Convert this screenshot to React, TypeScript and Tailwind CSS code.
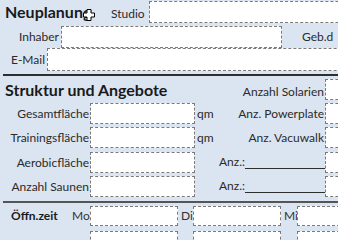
import React from 'react';

const Field: React.FC<{ className?: string }> = ({ className = '' }) => (
  <div className={`bg-white border border-dashed border-[#7a7a7a] shrink-0 ${className}`} />
);

const Label: React.FC<{ className?: string; children: React.ReactNode }> = ({ className = '', children }) => (
  <span className={`shrink-0 whitespace-nowrap text-[12px] text-[#2a2a2a] ${className}`}>{children}</span>
);

const rows = [
  { left: 'Gesamtfläche', unit: 'qm', right: 'Anz. Powerplate', mt: 'mt-[3px]' },
  { left: 'Trainingsfläche', unit: 'qm', right: 'Anz. Vacuwalk', mt: 'mt-[3px]' },
  { left: 'Aerobicfläche', unit: '', right: 'anz', mt: 'mt-[4px]' },
  { left: 'Anzahl Saunen', unit: '', right: 'anz', mt: 'mt-[3px]' },
];

export default function App() {
  return (
    <div className="relative w-[338px] h-[240px] overflow-hidden bg-[#dbe5f1] font-['Lato',sans-serif]">
      <div className="w-[420px]">
        {/* Kopf */}
        <div className="flex items-center pt-[1px] h-[23px]">
          <span className="w-[111px] shrink-0 pl-[5px] text-[16px] font-bold text-[#1a1a1a]">Neuplanung</span>
          <Label className="w-[38px] pt-[3px]">Studio</Label>
          <Field className="w-[260px] h-[22px]" />
        </div>
        <div className="flex items-center mt-[3px]">
          <Label className="w-[61px] text-right pr-[2px]">Inhaber</Label>
          <Field className="w-[221px] h-[22px]" />
          <Label className="pl-[20px]">Geb.d</Label>
        </div>
        <div className="flex items-center">
          <Label className="w-[47px] text-right pr-[2px]">E-Mail</Label>
          <Field className="w-[360px] h-[23px]" />
        </div>
        <div className="ml-[3px] mt-[3px] h-[2px] bg-[#2e2e2e]" />

        {/* Struktur */}
        <div className="flex items-center mt-[3px] h-[21px]">
          <span className="w-[234px] shrink-0 pl-[5px] text-[16px] font-bold text-[#1a1a1a]">Struktur und Angebote</span>
          <Label className="w-[91px] text-right pr-[1px] pt-[4px]">Anzahl Solarien</Label>
          <Field className="w-[60px] h-[21px]" />
        </div>
        {rows.map((r, i) => (
          <div key={i} className={`flex items-center ${r.mt}`}>
            <Label className="w-[90px] text-right pr-[1px]">{r.left}</Label>
            <Field className="w-[105px] h-[21px]" />
            {r.right === 'anz' ? (
              <div className="w-[130px] shrink-0 flex items-end pl-[24px] h-[21px] pb-[2px]">
                <Label>Anz.:</Label>
                <div className="flex-1 border-b border-[#2e2e2e] mb-[2px]" />
              </div>
            ) : (
              <>
                <Label className="w-[40px] pl-[2px]">{r.unit}</Label>
                <Label className="w-[90px] text-right pr-[1px]">{r.right}</Label>
              </>
            )}
            <Field className="w-[60px] h-[21px]" />
          </div>
        ))}
        <div className="ml-[3px] mt-[4px] h-[2px] bg-[#555]" />

        {/* Öffnungszeiten */}
        <div className="flex items-center mt-[3px]">
          <span className="w-[72px] shrink-0 pl-[11px] text-[12px] font-bold text-[#1a1a1a]">Öffn.zeit</span>
          <Label className="w-[18px] text-right pr-[1px] text-[#333]">Mo</Label>
          <Field className="w-[88px] h-[20px]" />
          <Label className="w-[15px] pl-[3px] text-[#333]">Di</Label>
          <Field className="w-[88px] h-[20px]" />
          <Label className="w-[16px] pl-[3px] text-[#333]">Mi</Label>
          <Field className="w-[88px] h-[20px]" />
        </div>
        <div className="flex items-center mt-[5px]">
          <span className="w-[90px] shrink-0" />
          <Field className="w-[88px] h-[20px]" />
          <span className="w-[15px] shrink-0" />
          <Field className="w-[88px] h-[20px]" />
          <span className="w-[16px] shrink-0" />
          <Field className="w-[88px] h-[20px]" />
        </div>
      </div>

      {/* Mauszeiger */}
      <svg className="absolute left-[83px] top-[9px]" width="12" height="12" viewBox="0 0 12 12">
        <path d="M4 0.5h4v3.5h3.5v4H8v3.5H4V8H0.5V4H4z" fill="#fff" stroke="#000" strokeWidth="1" />
      </svg>
    </div>
  );
}
